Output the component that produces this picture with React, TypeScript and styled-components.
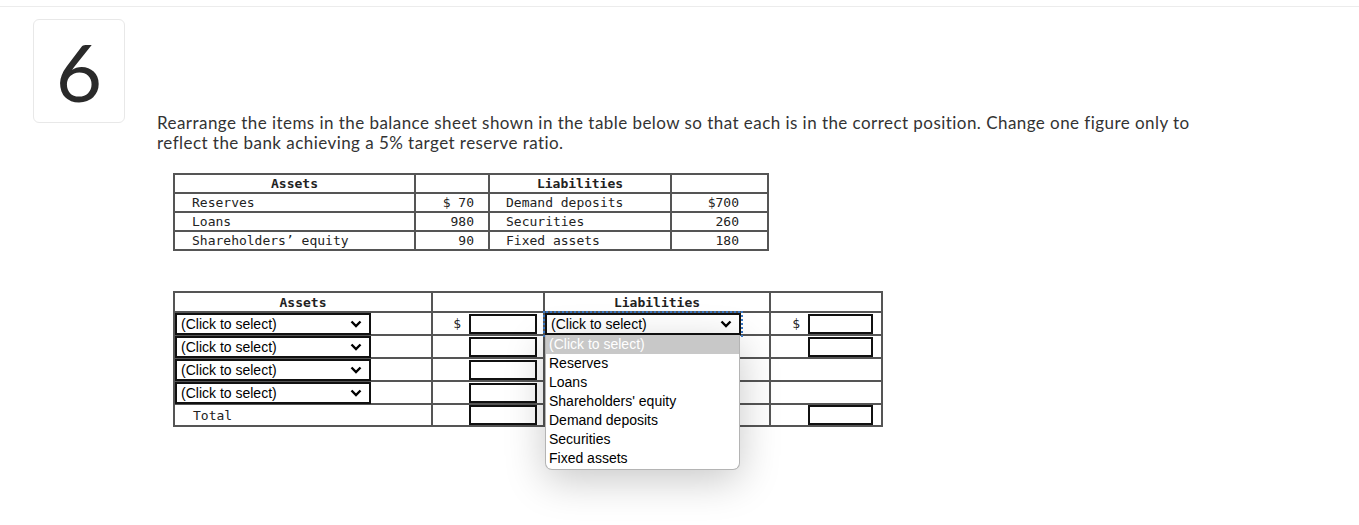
import React from 'react';
import styled, { createGlobalStyle, css } from 'styled-components';

const GlobalStyle = createGlobalStyle`
  html, body {
    margin: 0;
    background: #fff;
  }
`;

const Page = styled.div`
  min-height: 525px;
`;

const TopBar = styled.div`
  height: 6px;
  border-bottom: 1px solid #ececec;
`;

const Question = styled.div`
  display: flex;
  align-items: flex-start;
  padding: 12px 0 0 33px;
`;

const NumberBox = styled.div`
  width: 92px;
  height: 104px;
  box-sizing: border-box;
  border: 1px solid #e8e8e8;
  border-radius: 6px;
  display: flex;
  align-items: center;
  justify-content: center;
  font-family: Lato, 'Open Sans', sans-serif;
  font-weight: 400;
  font-size: 80px;
  color: #2a2a2a;
`;

const Content = styled.div`
  margin: 93px 0 0 32px;
`;

const Prompt = styled.p`
  margin: 0;
  padding-top: 1px;
  font-family: Lato, 'Open Sans', sans-serif;
  font-size: 17px;
  letter-spacing: 0.45px;
  line-height: 20px;
  color: #333;
`;

const Sheet = styled.div<{ $cols: string; $rows: string; $top: number }>`
  display: grid;
  grid-template-columns: ${({ $cols }) => $cols};
  grid-template-rows: ${({ $rows }) => $rows};
  width: max-content;
  margin: ${({ $top }) => $top}px 0 0 16px;
  border-top: 2px solid #555;
  border-left: 2px solid #555;
  font-family: 'DejaVu Sans Mono', 'Liberation Mono', monospace;
  font-size: 13px;
  color: #222;
`;

const Cell = styled.div<{
  $align?: 'left' | 'center' | 'right';
  $bold?: boolean;
  $padL?: number;
  $padR?: number;
}>`
  box-sizing: border-box;
  border-right: 2px solid #555;
  border-bottom: 2px solid #555;
  display: flex;
  align-items: center;
  padding-left: ${({ $padL }) => $padL ?? 0}px;
  padding-right: ${({ $padR }) => $padR ?? 0}px;
  white-space: pre;
  justify-content: ${({ $align }) =>
    $align === 'center' ? 'center' : $align === 'right' ? 'flex-end' : 'flex-start'};
  ${({ $bold }) =>
    $bold &&
    css`
      font-weight: bold;
    `}
`;

const SelectWrap = styled.div`
  position: relative;
  z-index: 5;
`;

const SelectBox = styled.div<{ $focused?: boolean }>`
  box-sizing: border-box;
  width: 196px;
  height: 22px;
  border: 2px solid #111;
  display: flex;
  align-items: center;
  justify-content: space-between;
  padding: 0 7px 0 4px;
  font-family: 'Liberation Sans', Arial, sans-serif;
  font-size: 14px;
  color: #000;
  background: #fff;
  ${({ $focused }) =>
    $focused &&
    css`
      outline: 2px dotted #3b78c4;
      outline-offset: 0;
    `}
`;

const Dropdown = styled.ul`
  position: absolute;
  top: 100%;
  left: 0;
  margin: 0;
  padding: 0 0 1px;
  list-style: none;
  width: 195px;
  box-sizing: border-box;
  background: #fff;
  border: 1px solid #b4b4b4;
  border-top: none;
  border-radius: 0 0 7px 7px;
  box-shadow: 0 10px 40px rgba(0, 0, 0, 0.22);
  font-family: 'Liberation Sans', Arial, sans-serif;
  font-size: 14px;
  color: #000;
  overflow: hidden;
`;

const Option = styled.li<{ $active?: boolean }>`
  height: 19px;
  line-height: 19px;
  padding-left: 3px;
  ${({ $active }) =>
    $active &&
    css`
      background: #c8c8c8;
      color: #fff;
    `}
`;

const Dollar = styled.span`
  margin-right: 8px;
`;

const Field = styled.div<{ $w: number }>`
  box-sizing: border-box;
  width: ${({ $w }) => $w}px;
  height: 20px;
  border: 2px solid #111;
  background: #fff;
`;

const Chevron = () => (
  <svg width="12" height="8" viewBox="0 0 12 8">
    <path d="M1.5 1.5 L6 6 L10.5 1.5" fill="none" stroke="#000" strokeWidth="2.4" />
  </svg>
);

const Select = ({ focused }: { focused?: boolean }) => (
  <SelectBox $focused={focused}>
    (Click to select)
    <Chevron />
  </SelectBox>
);

const options = [
  'Reserves',
  'Loans',
  "Shareholders' equity",
  'Demand deposits',
  'Securities',
  'Fixed assets',
];

const original = [
  ['Reserves', '$ 70', 'Demand deposits', '$700'],
  ['Loans', '980', 'Securities', '260'],
  ['Shareholders’ equity', '90', 'Fixed assets', '180'],
];

const App: React.FC = () => {
  return (
    <Page>
      <GlobalStyle />
      <TopBar />
      <Question>
        <NumberBox>6</NumberBox>
        <Content>
          <Prompt>
            Rearrange the items in the balance sheet shown in the table below so that each is in
            the correct position. Change one figure only to
            <br />
            reflect the bank achieving a 5% target reserve ratio.
          </Prompt>

          <Sheet $cols="241px 74px 182px 97px" $rows="19px 19px 19px 19px" $top={20}>
            <Cell $align="center" $bold>
              Assets
            </Cell>
            <Cell />
            <Cell $align="center" $bold>
              Liabilities
            </Cell>
            <Cell />
            {original.map(([a, av, l, lv]) => (
              <React.Fragment key={a}>
                <Cell $padL={17}>{a}</Cell>
                <Cell $align="right" $padR={14}>
                  {av}
                </Cell>
                <Cell $padL={16}>{l}</Cell>
                <Cell $align="right" $padR={28}>
                  {lv}
                </Cell>
              </React.Fragment>
            ))}
          </Sheet>

          <Sheet $cols="258px 112px 226px 112px" $rows="20px 23px 23px 23px 23px 22px" $top={40}>
            <Cell $align="center" $bold>
              Assets
            </Cell>
            <Cell />
            <Cell $align="center" $bold>
              Liabilities
            </Cell>
            <Cell />

            <Cell>
              <Select />
            </Cell>
            <Cell $align="right" $padR={6}>
              <Dollar>$</Dollar>
              <Field $w={68} />
            </Cell>
            <Cell>
              <SelectWrap>
                <Select focused />
                <Dropdown>
                  <Option $active>(Click to select)</Option>
                  {options.map((o) => (
                    <Option key={o}>{o}</Option>
                  ))}
                </Dropdown>
              </SelectWrap>
            </Cell>
            <Cell $align="right" $padR={8}>
              <Dollar>$</Dollar>
              <Field $w={65} />
            </Cell>

            <Cell>
              <Select />
            </Cell>
            <Cell $align="right" $padR={6}>
              <Field $w={68} />
            </Cell>
            {/* liabilities select of this row sits under the open list */}
            <Cell />
            <Cell $align="right" $padR={8}>
              <Field $w={65} />
            </Cell>

            <Cell>
              <Select />
            </Cell>
            <Cell $align="right" $padR={6}>
              <Field $w={68} />
            </Cell>
            <Cell />
            <Cell />

            <Cell>
              <Select />
            </Cell>
            <Cell $align="right" $padR={6}>
              <Field $w={68} />
            </Cell>
            <Cell />
            <Cell />

            <Cell $padL={18}>Total</Cell>
            <Cell $align="right" $padR={6}>
              <Field $w={68} />
            </Cell>
            <Cell />
            <Cell $align="right" $padR={8}>
              <Field $w={65} />
            </Cell>
          </Sheet>
        </Content>
      </Question>
    </Page>
  );
};

export default App;
